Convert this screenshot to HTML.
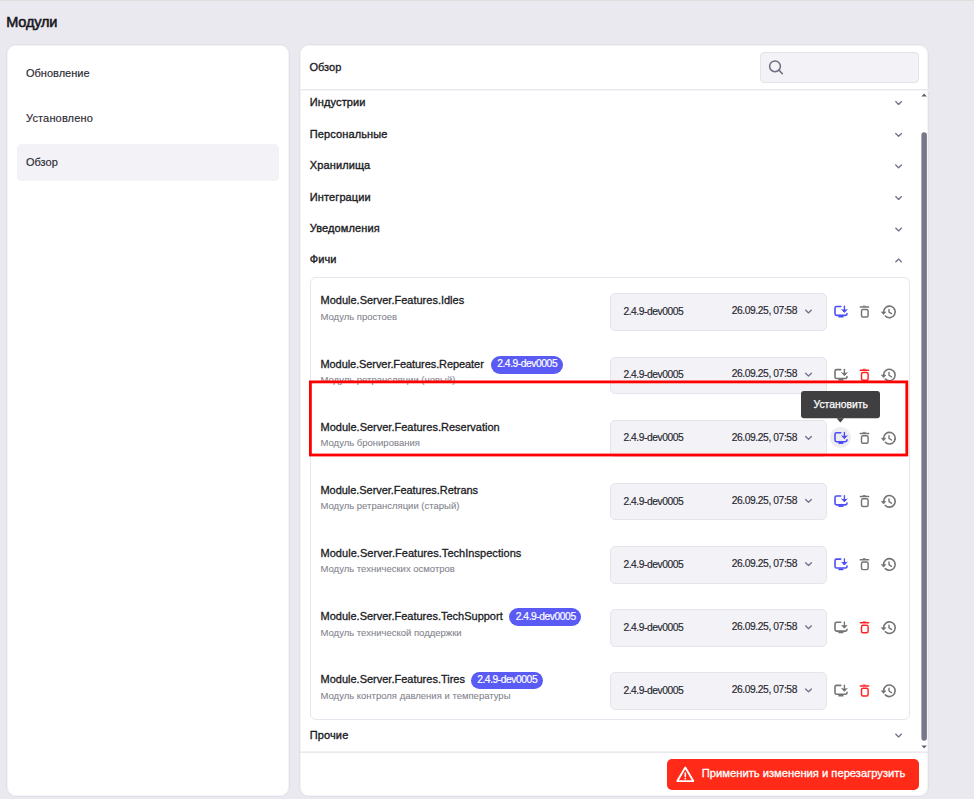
<!DOCTYPE html>
<html><head><meta charset="utf-8"><style>
html,body{margin:0;padding:0;}
body{width:974px;height:799px;overflow:hidden;position:relative;background:#e9e9ef;font-family:"Liberation Sans", sans-serif;}
.t{position:absolute;white-space:nowrap;}
.b{position:absolute;}
.ov{position:absolute;left:0;top:0;}
</style></head><body>
<div class="b" style="left:0.00px;top:0.00px;width:974.00px;height:1.00px;background:#dfe0de;border-radius:0px;"></div>
<div class="t" style="left:6.30px;top:14.73px;font-size:14.5px;line-height:14.5px;color:#16161e;font-weight:400;letter-spacing:-0.2px;-webkit-text-stroke:0.55px #16161e;">Модули</div>
<div class="b" style="left:6.00px;top:44.00px;width:284.00px;height:753.00px;background:#fff;border:1px solid #e0e0e9;box-sizing:border-box;border-radius:10px;box-shadow:inset 0 0 0 1px #f4f4f7;"></div>
<div class="b" style="left:17.00px;top:144.00px;width:262.00px;height:37.00px;background:#f2f2f7;border-radius:5px;"></div>
<div class="t" style="left:26.00px;top:68.49px;font-size:11px;line-height:11px;color:#2a2a33;font-weight:400;letter-spacing:0px;-webkit-text-stroke:0.15px #2a2a33;">Обновление</div>
<div class="t" style="left:26.00px;top:113.49px;font-size:11px;line-height:11px;color:#2a2a33;font-weight:400;letter-spacing:0.15px;-webkit-text-stroke:0.15px #2a2a33;">Установлено</div>
<div class="t" style="left:26.00px;top:156.59px;font-size:11px;line-height:11px;color:#2a2a33;font-weight:400;letter-spacing:0px;-webkit-text-stroke:0.15px #2a2a33;">Обзор</div>
<div class="b" style="left:299.00px;top:44.00px;width:630.00px;height:753.00px;background:#fff;border:1px solid #e0e0e9;box-sizing:border-box;border-radius:10px;box-shadow:inset 0 0 0 1px #f4f4f7;"></div>
<div class="t" style="left:309.50px;top:61.99px;font-size:11px;line-height:11px;color:#1f1f29;font-weight:400;letter-spacing:0px;-webkit-text-stroke:0.35px #1f1f29;">Обзор</div>
<div class="b" style="left:760.00px;top:52.00px;width:158.50px;height:30.50px;background:#f2f2f7;border:1px solid #e2e2ea;box-sizing:border-box;border-radius:4px;"></div>
<div class="b" style="left:300.00px;top:89.00px;width:629.00px;height:1.00px;background:#e8e8ee;border-radius:0px;"></div>
<div class="b" style="left:300.00px;top:90.00px;width:629.00px;height:1.00px;background:#f4f4f7;border-radius:0px;"></div>
<div class="t" style="left:309.75px;top:96.99px;font-size:11px;line-height:11px;color:#1b1b24;font-weight:400;letter-spacing:0.12px;-webkit-text-stroke:0.35px #1b1b24;">Индустрии</div>
<div class="t" style="left:309.75px;top:128.59px;font-size:11px;line-height:11px;color:#1b1b24;font-weight:400;letter-spacing:0.12px;-webkit-text-stroke:0.35px #1b1b24;">Персональные</div>
<div class="t" style="left:309.75px;top:160.09px;font-size:11px;line-height:11px;color:#1b1b24;font-weight:400;letter-spacing:0.12px;-webkit-text-stroke:0.35px #1b1b24;">Хранилища</div>
<div class="t" style="left:309.75px;top:191.69px;font-size:11px;line-height:11px;color:#1b1b24;font-weight:400;letter-spacing:0.12px;-webkit-text-stroke:0.35px #1b1b24;">Интеграции</div>
<div class="t" style="left:309.75px;top:223.19px;font-size:11px;line-height:11px;color:#1b1b24;font-weight:400;letter-spacing:0.12px;-webkit-text-stroke:0.35px #1b1b24;">Уведомления</div>
<div class="t" style="left:309.75px;top:254.39px;font-size:11px;line-height:11px;color:#1b1b24;font-weight:400;letter-spacing:0.12px;-webkit-text-stroke:0.35px #1b1b24;">Фичи</div>
<div class="t" style="left:309.75px;top:729.69px;font-size:11px;line-height:11px;color:#1b1b24;font-weight:400;letter-spacing:0.12px;-webkit-text-stroke:0.35px #1b1b24;">Прочие</div>
<div class="b" style="left:310.00px;top:277.00px;width:600.00px;height:443.00px;background:#fff;border:1px solid #e6e6ee;box-sizing:border-box;border-radius:6px;"></div>
<div class="t" style="left:320.50px;top:295.49px;font-size:11px;line-height:11px;color:#1b1b24;font-weight:400;letter-spacing:0px;-webkit-text-stroke:0.3px #1b1b24;">Module.Server.Features.Idles</div>
<div class="t" style="left:320.50px;top:311.76px;font-size:9.5px;line-height:9.5px;color:#83838d;font-weight:400;letter-spacing:0px;-webkit-text-stroke:0.08px #83838d;">Модуль простоев</div>
<div class="b" style="left:610.00px;top:293.40px;width:217.00px;height:37.50px;background:#f2f2f7;border:1px solid #e4e4ec;box-sizing:border-box;border-radius:5px;"></div>
<div class="t" style="left:623.40px;top:307.18px;font-size:10.3px;line-height:10.3px;color:#26262e;font-weight:400;letter-spacing:-0.45px;-webkit-text-stroke:0.15px #26262e;">2.4.9-dev0005</div>
<div class="t" style="left:731.70px;top:306.28px;font-size:10.3px;line-height:10.3px;color:#26262e;font-weight:400;letter-spacing:-0.42px;-webkit-text-stroke:0.15px #26262e;">26.09.25, 07:58</div>
<div class="t" style="left:320.50px;top:358.64px;font-size:11px;line-height:11px;color:#1b1b24;font-weight:400;letter-spacing:-0.08px;-webkit-text-stroke:0.3px #1b1b24;">Module.Server.Features.Repeater</div>
<div class="t" style="left:320.50px;top:374.91px;font-size:9.5px;line-height:9.5px;color:#83838d;font-weight:400;letter-spacing:0px;-webkit-text-stroke:0.08px #83838d;">Модуль ретрансляции (новый)</div>
<div class="b" style="left:490.80px;top:355.75px;width:72.00px;height:17.80px;background:#5a5af4;border-radius:9px;"></div>
<div class="t" style="left:497.20px;top:359.03px;font-size:10.3px;line-height:10.3px;color:#fff;font-weight:400;letter-spacing:-0.45px;-webkit-text-stroke:0.2px #fff;">2.4.9-dev0005</div>
<div class="b" style="left:610.00px;top:356.55px;width:217.00px;height:37.50px;background:#f2f2f7;border:1px solid #e4e4ec;box-sizing:border-box;border-radius:5px;"></div>
<div class="t" style="left:623.40px;top:370.33px;font-size:10.3px;line-height:10.3px;color:#26262e;font-weight:400;letter-spacing:-0.45px;-webkit-text-stroke:0.15px #26262e;">2.4.9-dev0005</div>
<div class="t" style="left:731.70px;top:369.43px;font-size:10.3px;line-height:10.3px;color:#26262e;font-weight:400;letter-spacing:-0.42px;-webkit-text-stroke:0.15px #26262e;">26.09.25, 07:58</div>
<div class="t" style="left:320.50px;top:421.79px;font-size:11px;line-height:11px;color:#1b1b24;font-weight:400;letter-spacing:0px;-webkit-text-stroke:0.3px #1b1b24;">Module.Server.Features.Reservation</div>
<div class="t" style="left:320.50px;top:438.06px;font-size:9.5px;line-height:9.5px;color:#83838d;font-weight:400;letter-spacing:0px;-webkit-text-stroke:0.08px #83838d;">Модуль бронирования</div>
<div class="b" style="left:610.00px;top:419.70px;width:217.00px;height:37.50px;background:#f2f2f7;border:1px solid #e4e4ec;box-sizing:border-box;border-radius:5px;"></div>
<div class="t" style="left:623.40px;top:433.48px;font-size:10.3px;line-height:10.3px;color:#26262e;font-weight:400;letter-spacing:-0.45px;-webkit-text-stroke:0.15px #26262e;">2.4.9-dev0005</div>
<div class="t" style="left:731.70px;top:432.58px;font-size:10.3px;line-height:10.3px;color:#26262e;font-weight:400;letter-spacing:-0.42px;-webkit-text-stroke:0.15px #26262e;">26.09.25, 07:58</div>
<div class="t" style="left:320.50px;top:484.94px;font-size:11px;line-height:11px;color:#1b1b24;font-weight:400;letter-spacing:-0.05px;-webkit-text-stroke:0.3px #1b1b24;">Module.Server.Features.Retrans</div>
<div class="t" style="left:320.50px;top:501.21px;font-size:9.5px;line-height:9.5px;color:#83838d;font-weight:400;letter-spacing:0px;-webkit-text-stroke:0.08px #83838d;">Модуль ретрансляции (старый)</div>
<div class="b" style="left:610.00px;top:482.85px;width:217.00px;height:37.50px;background:#f2f2f7;border:1px solid #e4e4ec;box-sizing:border-box;border-radius:5px;"></div>
<div class="t" style="left:623.40px;top:496.63px;font-size:10.3px;line-height:10.3px;color:#26262e;font-weight:400;letter-spacing:-0.45px;-webkit-text-stroke:0.15px #26262e;">2.4.9-dev0005</div>
<div class="t" style="left:731.70px;top:495.73px;font-size:10.3px;line-height:10.3px;color:#26262e;font-weight:400;letter-spacing:-0.42px;-webkit-text-stroke:0.15px #26262e;">26.09.25, 07:58</div>
<div class="t" style="left:320.50px;top:548.09px;font-size:11px;line-height:11px;color:#1b1b24;font-weight:400;letter-spacing:0.04px;-webkit-text-stroke:0.3px #1b1b24;">Module.Server.Features.TechInspections</div>
<div class="t" style="left:320.50px;top:564.36px;font-size:9.5px;line-height:9.5px;color:#83838d;font-weight:400;letter-spacing:0px;-webkit-text-stroke:0.08px #83838d;">Модуль технических осмотров</div>
<div class="b" style="left:610.00px;top:546.00px;width:217.00px;height:37.50px;background:#f2f2f7;border:1px solid #e4e4ec;box-sizing:border-box;border-radius:5px;"></div>
<div class="t" style="left:623.40px;top:559.78px;font-size:10.3px;line-height:10.3px;color:#26262e;font-weight:400;letter-spacing:-0.45px;-webkit-text-stroke:0.15px #26262e;">2.4.9-dev0005</div>
<div class="t" style="left:731.70px;top:558.88px;font-size:10.3px;line-height:10.3px;color:#26262e;font-weight:400;letter-spacing:-0.42px;-webkit-text-stroke:0.15px #26262e;">26.09.25, 07:58</div>
<div class="t" style="left:320.50px;top:611.24px;font-size:11px;line-height:11px;color:#1b1b24;font-weight:400;letter-spacing:0px;-webkit-text-stroke:0.3px #1b1b24;">Module.Server.Features.TechSupport</div>
<div class="t" style="left:320.50px;top:627.51px;font-size:9.5px;line-height:9.5px;color:#83838d;font-weight:400;letter-spacing:0px;-webkit-text-stroke:0.08px #83838d;">Модуль технической поддержки</div>
<div class="b" style="left:509.30px;top:608.35px;width:72.00px;height:17.80px;background:#5a5af4;border-radius:9px;"></div>
<div class="t" style="left:515.70px;top:611.63px;font-size:10.3px;line-height:10.3px;color:#fff;font-weight:400;letter-spacing:-0.45px;-webkit-text-stroke:0.2px #fff;">2.4.9-dev0005</div>
<div class="b" style="left:610.00px;top:609.15px;width:217.00px;height:37.50px;background:#f2f2f7;border:1px solid #e4e4ec;box-sizing:border-box;border-radius:5px;"></div>
<div class="t" style="left:623.40px;top:622.93px;font-size:10.3px;line-height:10.3px;color:#26262e;font-weight:400;letter-spacing:-0.45px;-webkit-text-stroke:0.15px #26262e;">2.4.9-dev0005</div>
<div class="t" style="left:731.70px;top:622.03px;font-size:10.3px;line-height:10.3px;color:#26262e;font-weight:400;letter-spacing:-0.42px;-webkit-text-stroke:0.15px #26262e;">26.09.25, 07:58</div>
<div class="t" style="left:320.50px;top:674.39px;font-size:11px;line-height:11px;color:#1b1b24;font-weight:400;letter-spacing:0px;-webkit-text-stroke:0.3px #1b1b24;">Module.Server.Features.Tires</div>
<div class="t" style="left:320.50px;top:690.66px;font-size:9.5px;line-height:9.5px;color:#83838d;font-weight:400;letter-spacing:0px;-webkit-text-stroke:0.08px #83838d;">Модуль контроля давления и температуры</div>
<div class="b" style="left:470.80px;top:671.50px;width:72.00px;height:17.80px;background:#5a5af4;border-radius:9px;"></div>
<div class="t" style="left:477.20px;top:674.78px;font-size:10.3px;line-height:10.3px;color:#fff;font-weight:400;letter-spacing:-0.45px;-webkit-text-stroke:0.2px #fff;">2.4.9-dev0005</div>
<div class="b" style="left:610.00px;top:672.30px;width:217.00px;height:37.50px;background:#f2f2f7;border:1px solid #e4e4ec;box-sizing:border-box;border-radius:5px;"></div>
<div class="t" style="left:623.40px;top:686.08px;font-size:10.3px;line-height:10.3px;color:#26262e;font-weight:400;letter-spacing:-0.45px;-webkit-text-stroke:0.15px #26262e;">2.4.9-dev0005</div>
<div class="t" style="left:731.70px;top:685.18px;font-size:10.3px;line-height:10.3px;color:#26262e;font-weight:400;letter-spacing:-0.42px;-webkit-text-stroke:0.15px #26262e;">26.09.25, 07:58</div>
<div class="b" style="left:300.00px;top:751.00px;width:628.00px;height:1.00px;background:#f1f1f5;border-radius:0px;"></div>
<div class="b" style="left:300.00px;top:752.00px;width:628.00px;height:1.00px;background:#e8e8ee;border-radius:0px;"></div>
<div class="b" style="left:667.00px;top:758.60px;width:251.50px;height:31.40px;background:#ff2a17;border-radius:5px;"></div>
<div class="t" style="left:701.80px;top:767.52px;font-size:11.2px;line-height:11.2px;color:#fff;font-weight:400;letter-spacing:0px;-webkit-text-stroke:0.3px #fff;">Применить изменения и перезагрузить</div>
<div class="b" style="left:829.70px;top:427.10px;width:21.2px;height:21.2px;border-radius:50%;background:#ededf0"></div>
<svg class="ov" width="974" height="799" viewBox="0 0 974 799"><path d="M895.7,101.6 L898.6,104.4 L901.5,101.6" fill="none" stroke="#737389" stroke-width="1.35" stroke-linecap="round" stroke-linejoin="round"/><path d="M895.7,133.4 L898.6,136.20000000000002 L901.5,133.4" fill="none" stroke="#737389" stroke-width="1.35" stroke-linecap="round" stroke-linejoin="round"/><path d="M895.7,165.0 L898.6,167.8 L901.5,165.0" fill="none" stroke="#737389" stroke-width="1.35" stroke-linecap="round" stroke-linejoin="round"/><path d="M895.7,196.6 L898.6,199.4 L901.5,196.6" fill="none" stroke="#737389" stroke-width="1.35" stroke-linecap="round" stroke-linejoin="round"/><path d="M895.7,228.1 L898.6,230.9 L901.5,228.1" fill="none" stroke="#737389" stroke-width="1.35" stroke-linecap="round" stroke-linejoin="round"/><path d="M895.7,734.1 L898.6,736.9 L901.5,734.1" fill="none" stroke="#737389" stroke-width="1.35" stroke-linecap="round" stroke-linejoin="round"/><path d="M895.7,261.9 L898.6,259.1 L901.5,261.9" fill="none" stroke="#737389" stroke-width="1.35" stroke-linecap="round" stroke-linejoin="round"/><circle cx="775" cy="66.3" r="5.4" fill="none" stroke="#6e6e80" stroke-width="1.5"/><path d="M779,70.3 L782.3,73.6" stroke="#6e6e80" stroke-width="1.5" stroke-linecap="round"/><path d="M805.6,310.1 L808.5,312.9 L811.4,310.1" fill="none" stroke="#737389" stroke-width="1.35" stroke-linecap="round" stroke-linejoin="round"/><g transform="translate(0,0.00)"><path d="M840.75,306.5 H836.6 Q835,306.5 835,308.1 V313.8 Q835,315.4 836.6,315.4 H845.4 Q847,315.4 847,313.8 V313.5" fill="none" stroke="#4d4df8" stroke-width="1.6" stroke-linecap="round" stroke-linejoin="round"/><rect x="838.3" y="315.8" width="5.2" height="1.8" rx="0.6" fill="#4d4df8"/><path d="M844.4,306.2 V311.5" stroke="#4d4df8" stroke-width="1.35" stroke-linecap="round"/><path d="M841.8,309.5 L844.4,312.4 L847,309.5" fill="#4d4df8" stroke="#4d4df8" stroke-width="1.0" stroke-linejoin="round" stroke-linecap="round"/></g><g transform="translate(0,0.00)"><path d="M860.3,307.1 H868.6" stroke="#747474" stroke-width="1.5" stroke-linecap="round"/><path d="M863.2,306.1 H865.3" stroke="#747474" stroke-width="0.9" stroke-linecap="round"/><rect x="861.5" y="309.4" width="6.6" height="7.6" rx="1.5" fill="none" stroke="#747474" stroke-width="1.45"/></g><g transform="translate(0,0.00)"><path d="M883.6,311.9 A5.8,5.8 0 1 1 885.3,316.0" fill="none" stroke="#747474" stroke-width="1.6" stroke-linecap="round"/><path d="M881.3,311.9 L885.9,311.9 L883.6,314.6 Z" fill="#747474" stroke="#747474" stroke-width="0.6" stroke-linejoin="round"/><path d="M889,309.4 V312.1 L891.5,313.7" fill="none" stroke="#747474" stroke-width="1.4" stroke-linecap="round" stroke-linejoin="round"/></g><path d="M805.6,373.25 L808.5,376.04999999999995 L811.4,373.25" fill="none" stroke="#737389" stroke-width="1.35" stroke-linecap="round" stroke-linejoin="round"/><g transform="translate(0,63.15)"><path d="M840.75,306.5 H836.6 Q835,306.5 835,308.1 V313.8 Q835,315.4 836.6,315.4 H845.4 Q847,315.4 847,313.8 V313.5" fill="none" stroke="#747474" stroke-width="1.6" stroke-linecap="round" stroke-linejoin="round"/><rect x="838.3" y="315.8" width="5.2" height="1.8" rx="0.6" fill="#747474"/><path d="M844.4,306.2 V311.5" stroke="#747474" stroke-width="1.35" stroke-linecap="round"/><path d="M841.8,309.5 L844.4,312.4 L847,309.5" fill="#747474" stroke="#747474" stroke-width="1.0" stroke-linejoin="round" stroke-linecap="round"/></g><g transform="translate(0,63.15)"><path d="M860.3,307.1 H868.6" stroke="#ff2222" stroke-width="1.5" stroke-linecap="round"/><path d="M863.2,306.1 H865.3" stroke="#ff2222" stroke-width="0.9" stroke-linecap="round"/><rect x="861.5" y="309.4" width="6.6" height="7.6" rx="1.5" fill="none" stroke="#ff2222" stroke-width="1.45"/></g><g transform="translate(0,63.15)"><path d="M883.6,311.9 A5.8,5.8 0 1 1 885.3,316.0" fill="none" stroke="#747474" stroke-width="1.6" stroke-linecap="round"/><path d="M881.3,311.9 L885.9,311.9 L883.6,314.6 Z" fill="#747474" stroke="#747474" stroke-width="0.6" stroke-linejoin="round"/><path d="M889,309.4 V312.1 L891.5,313.7" fill="none" stroke="#747474" stroke-width="1.4" stroke-linecap="round" stroke-linejoin="round"/></g><path d="M805.6,436.40000000000003 L808.5,439.2 L811.4,436.40000000000003" fill="none" stroke="#737389" stroke-width="1.35" stroke-linecap="round" stroke-linejoin="round"/><g transform="translate(0,126.30)"><path d="M840.75,306.5 H836.6 Q835,306.5 835,308.1 V313.8 Q835,315.4 836.6,315.4 H845.4 Q847,315.4 847,313.8 V313.5" fill="none" stroke="#4d4df8" stroke-width="1.6" stroke-linecap="round" stroke-linejoin="round"/><rect x="838.3" y="315.8" width="5.2" height="1.8" rx="0.6" fill="#4d4df8"/><path d="M844.4,306.2 V311.5" stroke="#4d4df8" stroke-width="1.35" stroke-linecap="round"/><path d="M841.8,309.5 L844.4,312.4 L847,309.5" fill="#4d4df8" stroke="#4d4df8" stroke-width="1.0" stroke-linejoin="round" stroke-linecap="round"/></g><g transform="translate(0,126.30)"><path d="M860.3,307.1 H868.6" stroke="#747474" stroke-width="1.5" stroke-linecap="round"/><path d="M863.2,306.1 H865.3" stroke="#747474" stroke-width="0.9" stroke-linecap="round"/><rect x="861.5" y="309.4" width="6.6" height="7.6" rx="1.5" fill="none" stroke="#747474" stroke-width="1.45"/></g><g transform="translate(0,126.30)"><path d="M883.6,311.9 A5.8,5.8 0 1 1 885.3,316.0" fill="none" stroke="#747474" stroke-width="1.6" stroke-linecap="round"/><path d="M881.3,311.9 L885.9,311.9 L883.6,314.6 Z" fill="#747474" stroke="#747474" stroke-width="0.6" stroke-linejoin="round"/><path d="M889,309.4 V312.1 L891.5,313.7" fill="none" stroke="#747474" stroke-width="1.4" stroke-linecap="round" stroke-linejoin="round"/></g><path d="M805.6,499.55 L808.5,502.34999999999997 L811.4,499.55" fill="none" stroke="#737389" stroke-width="1.35" stroke-linecap="round" stroke-linejoin="round"/><g transform="translate(0,189.45)"><path d="M840.75,306.5 H836.6 Q835,306.5 835,308.1 V313.8 Q835,315.4 836.6,315.4 H845.4 Q847,315.4 847,313.8 V313.5" fill="none" stroke="#4d4df8" stroke-width="1.6" stroke-linecap="round" stroke-linejoin="round"/><rect x="838.3" y="315.8" width="5.2" height="1.8" rx="0.6" fill="#4d4df8"/><path d="M844.4,306.2 V311.5" stroke="#4d4df8" stroke-width="1.35" stroke-linecap="round"/><path d="M841.8,309.5 L844.4,312.4 L847,309.5" fill="#4d4df8" stroke="#4d4df8" stroke-width="1.0" stroke-linejoin="round" stroke-linecap="round"/></g><g transform="translate(0,189.45)"><path d="M860.3,307.1 H868.6" stroke="#747474" stroke-width="1.5" stroke-linecap="round"/><path d="M863.2,306.1 H865.3" stroke="#747474" stroke-width="0.9" stroke-linecap="round"/><rect x="861.5" y="309.4" width="6.6" height="7.6" rx="1.5" fill="none" stroke="#747474" stroke-width="1.45"/></g><g transform="translate(0,189.45)"><path d="M883.6,311.9 A5.8,5.8 0 1 1 885.3,316.0" fill="none" stroke="#747474" stroke-width="1.6" stroke-linecap="round"/><path d="M881.3,311.9 L885.9,311.9 L883.6,314.6 Z" fill="#747474" stroke="#747474" stroke-width="0.6" stroke-linejoin="round"/><path d="M889,309.4 V312.1 L891.5,313.7" fill="none" stroke="#747474" stroke-width="1.4" stroke-linecap="round" stroke-linejoin="round"/></g><path d="M805.6,562.7 L808.5,565.5 L811.4,562.7" fill="none" stroke="#737389" stroke-width="1.35" stroke-linecap="round" stroke-linejoin="round"/><g transform="translate(0,252.60)"><path d="M840.75,306.5 H836.6 Q835,306.5 835,308.1 V313.8 Q835,315.4 836.6,315.4 H845.4 Q847,315.4 847,313.8 V313.5" fill="none" stroke="#4d4df8" stroke-width="1.6" stroke-linecap="round" stroke-linejoin="round"/><rect x="838.3" y="315.8" width="5.2" height="1.8" rx="0.6" fill="#4d4df8"/><path d="M844.4,306.2 V311.5" stroke="#4d4df8" stroke-width="1.35" stroke-linecap="round"/><path d="M841.8,309.5 L844.4,312.4 L847,309.5" fill="#4d4df8" stroke="#4d4df8" stroke-width="1.0" stroke-linejoin="round" stroke-linecap="round"/></g><g transform="translate(0,252.60)"><path d="M860.3,307.1 H868.6" stroke="#747474" stroke-width="1.5" stroke-linecap="round"/><path d="M863.2,306.1 H865.3" stroke="#747474" stroke-width="0.9" stroke-linecap="round"/><rect x="861.5" y="309.4" width="6.6" height="7.6" rx="1.5" fill="none" stroke="#747474" stroke-width="1.45"/></g><g transform="translate(0,252.60)"><path d="M883.6,311.9 A5.8,5.8 0 1 1 885.3,316.0" fill="none" stroke="#747474" stroke-width="1.6" stroke-linecap="round"/><path d="M881.3,311.9 L885.9,311.9 L883.6,314.6 Z" fill="#747474" stroke="#747474" stroke-width="0.6" stroke-linejoin="round"/><path d="M889,309.4 V312.1 L891.5,313.7" fill="none" stroke="#747474" stroke-width="1.4" stroke-linecap="round" stroke-linejoin="round"/></g><path d="M805.6,625.85 L808.5,628.65 L811.4,625.85" fill="none" stroke="#737389" stroke-width="1.35" stroke-linecap="round" stroke-linejoin="round"/><g transform="translate(0,315.75)"><path d="M840.75,306.5 H836.6 Q835,306.5 835,308.1 V313.8 Q835,315.4 836.6,315.4 H845.4 Q847,315.4 847,313.8 V313.5" fill="none" stroke="#747474" stroke-width="1.6" stroke-linecap="round" stroke-linejoin="round"/><rect x="838.3" y="315.8" width="5.2" height="1.8" rx="0.6" fill="#747474"/><path d="M844.4,306.2 V311.5" stroke="#747474" stroke-width="1.35" stroke-linecap="round"/><path d="M841.8,309.5 L844.4,312.4 L847,309.5" fill="#747474" stroke="#747474" stroke-width="1.0" stroke-linejoin="round" stroke-linecap="round"/></g><g transform="translate(0,315.75)"><path d="M860.3,307.1 H868.6" stroke="#ff2222" stroke-width="1.5" stroke-linecap="round"/><path d="M863.2,306.1 H865.3" stroke="#ff2222" stroke-width="0.9" stroke-linecap="round"/><rect x="861.5" y="309.4" width="6.6" height="7.6" rx="1.5" fill="none" stroke="#ff2222" stroke-width="1.45"/></g><g transform="translate(0,315.75)"><path d="M883.6,311.9 A5.8,5.8 0 1 1 885.3,316.0" fill="none" stroke="#747474" stroke-width="1.6" stroke-linecap="round"/><path d="M881.3,311.9 L885.9,311.9 L883.6,314.6 Z" fill="#747474" stroke="#747474" stroke-width="0.6" stroke-linejoin="round"/><path d="M889,309.4 V312.1 L891.5,313.7" fill="none" stroke="#747474" stroke-width="1.4" stroke-linecap="round" stroke-linejoin="round"/></g><path d="M805.6,689.0 L808.5,691.8 L811.4,689.0" fill="none" stroke="#737389" stroke-width="1.35" stroke-linecap="round" stroke-linejoin="round"/><g transform="translate(0,378.90)"><path d="M840.75,306.5 H836.6 Q835,306.5 835,308.1 V313.8 Q835,315.4 836.6,315.4 H845.4 Q847,315.4 847,313.8 V313.5" fill="none" stroke="#747474" stroke-width="1.6" stroke-linecap="round" stroke-linejoin="round"/><rect x="838.3" y="315.8" width="5.2" height="1.8" rx="0.6" fill="#747474"/><path d="M844.4,306.2 V311.5" stroke="#747474" stroke-width="1.35" stroke-linecap="round"/><path d="M841.8,309.5 L844.4,312.4 L847,309.5" fill="#747474" stroke="#747474" stroke-width="1.0" stroke-linejoin="round" stroke-linecap="round"/></g><g transform="translate(0,378.90)"><path d="M860.3,307.1 H868.6" stroke="#ff2222" stroke-width="1.5" stroke-linecap="round"/><path d="M863.2,306.1 H865.3" stroke="#ff2222" stroke-width="0.9" stroke-linecap="round"/><rect x="861.5" y="309.4" width="6.6" height="7.6" rx="1.5" fill="none" stroke="#ff2222" stroke-width="1.45"/></g><g transform="translate(0,378.90)"><path d="M883.6,311.9 A5.8,5.8 0 1 1 885.3,316.0" fill="none" stroke="#747474" stroke-width="1.6" stroke-linecap="round"/><path d="M881.3,311.9 L885.9,311.9 L883.6,314.6 Z" fill="#747474" stroke="#747474" stroke-width="0.6" stroke-linejoin="round"/><path d="M889,309.4 V312.1 L891.5,313.7" fill="none" stroke="#747474" stroke-width="1.4" stroke-linecap="round" stroke-linejoin="round"/></g><path d="M921.4,96.6 L924.15,93.6 L926.9,96.6 Z" fill="#5f5f72"/><rect x="921.4" y="132.3" width="5.5" height="608.5" rx="2.75" fill="#77778a"/><path d="M921.4,745.6 L924.15,748.6 L926.9,745.6 Z" fill="#5f5f72"/><path d="M685.3,767.6 L693.3,781.1 L677.3,781.1 Z" fill="none" stroke="#fff" stroke-width="1.9" stroke-linejoin="round"/><path d="M685.3,773.1 V776.4" stroke="#fff" stroke-width="1.6" stroke-linecap="round"/><circle cx="685.3" cy="778.6" r="0.85" fill="#fff"/><rect x="310.4" y="381.9" width="596.4" height="73.1" fill="none" stroke="#ff0000" stroke-width="2.8"/><rect x="801" y="391" width="79" height="27.3" rx="3" fill="#3f3f42"/><path d="M836.6,418.2 L840.3,422.4 L844,418.2 Z" fill="#3f3f42"/></svg>
<div class="t" style="left:813.50px;top:400.30px;font-size:10.4px;line-height:10.4px;color:#fff;font-weight:400;letter-spacing:0px;-webkit-text-stroke:0.25px #fff;z-index:5;">Установить</div>
</body></html>
